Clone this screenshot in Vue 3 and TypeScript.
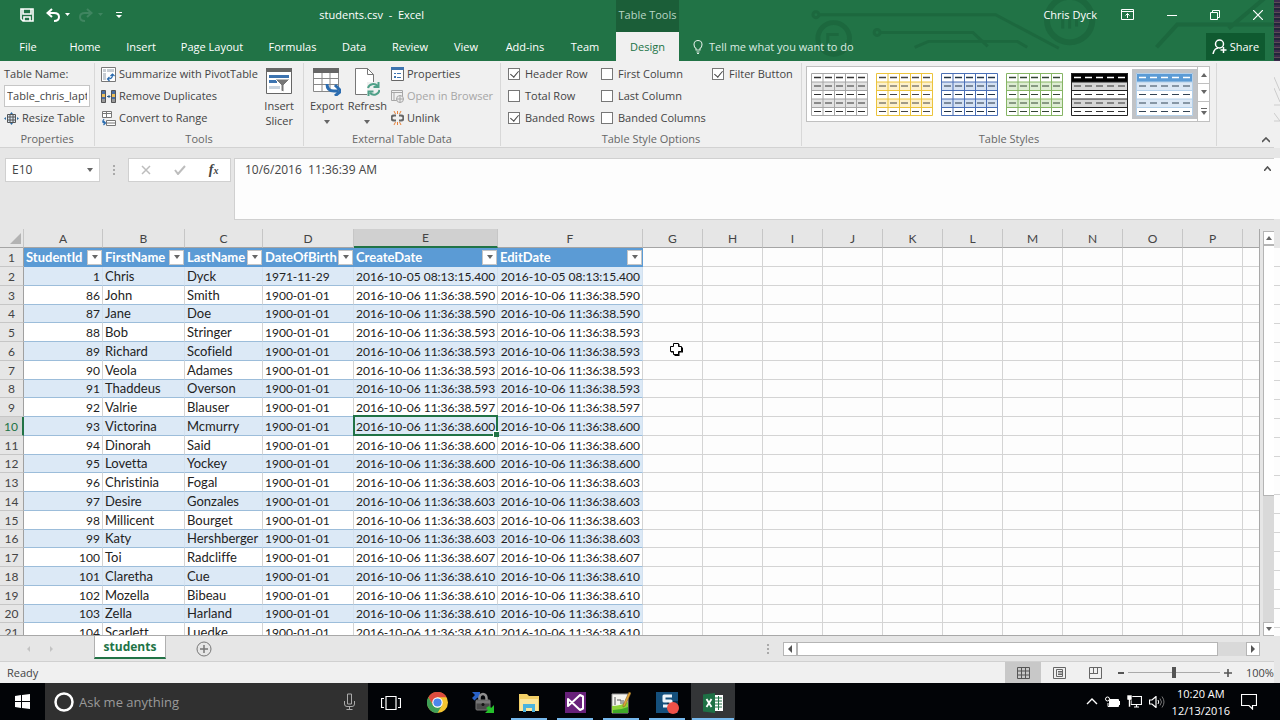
<script setup lang="ts">
import { ref } from 'vue'

interface Student {
  id: number
  first: string
  last: string
  born: string
  created: string
}

const tabs = ['File', 'Home', 'Insert', 'Page Layout', 'Formulas', 'Data', 'Review', 'View', 'Add-ins', 'Team', 'Design']

const names: [string, string, string][] = [
  ['John', 'Smith', '590'],
  ['Jane', 'Doe', '590'],
  ['Bob', 'Stringer', '593'],
  ['Richard', 'Scofield', '593'],
  ['Veola', 'Adames', '593'],
  ['Thaddeus', 'Overson', '593'],
  ['Valrie', 'Blauser', '597'],
  ['Victorina', 'Mcmurry', '600'],
  ['Dinorah', 'Said', '600'],
  ['Lovetta', 'Yockey', '600'],
  ['Christinia', 'Fogal', '603'],
  ['Desire', 'Gonzales', '603'],
  ['Millicent', 'Bourget', '603'],
  ['Katy', 'Hershberger', '603'],
  ['Toi', 'Radcliffe', '607'],
  ['Claretha', 'Cue', '610'],
  ['Mozella', 'Bibeau', '610'],
  ['Zella', 'Harland', '610'],
  ['Scarlett', 'Luedke', '610'],
]

const students: Student[] = [
  { id: 1, first: 'Chris', last: 'Dyck', born: '1971-11-29', created: '2016-10-05 08:13:15.400' },
  ...names.map(([first, last, ms], i) => ({
    id: 86 + i,
    first,
    last,
    born: '1900-01-01',
    created: `2016-10-06 11:36:38.${ms}`,
  })),
]

const letters = 'ABCDEFGHIJKLMNOP'.split('')
const fields = ['StudentId', 'FirstName', 'LastName', 'DateOfBirth', 'CreateDate', 'EditDate']
const blanks = 11

const options = ref([
  { label: 'Header Row', on: true },
  { label: 'First Column', on: false },
  { label: 'Filter Button', on: true },
  { label: 'Total Row', on: false },
  { label: 'Last Column', on: false },
  { label: 'Banded Rows', on: true },
  { label: 'Banded Columns', on: false },
])

interface TableStyle {
  name: string
  line: string
  head: string
  band: string
  dash: string
  columns: boolean
}

const tableStyles: TableStyle[] = [
  { name: 'Light gray', line: '#a6a6a6', head: '#fff', band: '#e3e3e3', dash: '#333', columns: true },
  { name: 'Gold', line: '#ecc43c', head: '#fff', band: '#fdf1cc', dash: '#444', columns: true },
  { name: 'Blue', line: '#4a6fb5', head: '#fff', band: '#d5e1f2', dash: '#234', columns: true },
  { name: 'Green', line: '#86b565', head: '#fff', band: '#deedd3', dash: '#343', columns: true },
  { name: 'Black', line: '#222', head: '#000', band: '#d6d6d6', dash: '#333', columns: false },
  { name: 'Medium blue', line: '#b4d0ea', head: '#5b9bd5', band: '#dce8f5', dash: '#345', columns: false },
]

const tableName = ref('Table_chris_laptop')
const cellName = ref('E10')
const formula = ref('10/6/2016  11:36:39 AM')
const zoom = ref(50)
const search = ref('')
</script>

<template>
  <div class="screen">
    <div class="desktop">
      <main class="excel">
        <header class="titlebar">
          <svg class="circuit" viewBox="0 0 470 60" aria-hidden="true">
            <g fill="none" stroke="#19613a" stroke-width="3" opacity=".6">
              <circle cx="6" cy="14" r="3" /><path d="M9 14H188L252 48" />
              <circle cx="68" cy="32" r="3" /><path d="M71 32H165L180 46M106 47L120 41H210L220 47" />
              <circle cx="24" cy="38" r="16" stroke-width="5" /><path d="M18 44V34H29" />
              <circle cx="263" cy="19" r="23" stroke-width="6" /><path d="M256 28V17M263 28V13M270 26V14" />
              <path d="M351 47L372 24H470M424 28L462 -4" stroke-width="4" />
            </g>
          </svg>
          <div class="quick">
            <button aria-label="Save"><svg width="14" height="14" viewBox="0 0 14 14"><path d="M1 1h12v12H3L1 11zM3 1v5h8V1M4 13V9h6v4" fill="none" stroke="#fff" stroke-width="1.6" /></svg></button>
            <button aria-label="Undo"><svg width="24" height="14" viewBox="0 0 24 14"><path d="M6 1L1.500 5L6 9M2 5H8Q13 5 13 9Q13 13 8 13" fill="none" stroke="#fff" stroke-width="2" /><path d="M19 5h5l-2.500 3z" fill="#fff" /></svg></button>
            <button aria-label="Redo" disabled><svg width="25" height="14" viewBox="0 0 25 14"><path d="M8 1L12.500 5L8 9M12 5H6Q1 5 1 9Q1 13 6 13" fill="none" stroke="#3f8560" stroke-width="2" /><path d="M19 5h5l-2.500 3z" fill="#3f8560" /></svg></button>
            <button aria-label="Customize"><svg width="6" height="7" viewBox="0 0 6 7"><path d="M0 0h6v1H0zM0 3h6L3 6z" fill="#fff" /></svg></button>
          </div>
          <h1 class="title">students.csv&nbsp; -&nbsp; Excel</h1>
          <div class="context">Table Tools</div>
          <div class="account">
            <span>Chris Dyck</span>
            <button aria-label="Ribbon options"><svg width="13" height="11" viewBox="0 0 13 11"><path d="M.5.5h12v10H.5zM.5 2.500h12M6.500 9V4.500M4.500 6.500l2-2 2 2" fill="none" stroke="#fff" /></svg></button>
            <button aria-label="Minimize"><svg width="10" height="10" viewBox="0 0 10 10"><path d="M0 5.500h10" stroke="#fff" /></svg></button>
            <button aria-label="Restore"><svg width="10" height="10" viewBox="0 0 10 10"><path d="M.5 2.500h7v7h-7zM2.500 2.500v-2h7v7h-2" fill="none" stroke="#fff" /></svg></button>
            <button aria-label="Close"><svg width="10" height="10" viewBox="0 0 10 10"><path d="M0 0l10 10M10 0L0 10" stroke="#fff" stroke-width="1.200" /></svg></button>
          </div>
          <nav class="tabs">
            <button v-for="t in tabs" :key="t" :class="{ active: t === 'Design' }">{{ t }}</button>
          </nav>
          <button class="tell">
            <svg width="10" height="14" viewBox="0 0 10 14"><path d="M3 10V8.500Q1 7 1 4.500A4 4 0 0 1 9 4.500Q9 7 7 8.500V10zM3.500 12h3M4 13.500h2" fill="none" stroke="#dcebe2" stroke-width="1.100" /></svg>
            Tell me what you want to do
          </button>
          <button class="share">
            <svg width="15" height="15" viewBox="0 0 15 15"><circle cx="7.500" cy="5" r="4" fill="none" stroke="#fff" stroke-width="1.500" /><path d="M1 15L2 12Q3 9.500 6 9M11.500 8v6M8.500 11h6" fill="none" stroke="#fff" stroke-width="1.500" /></svg>
            Share
          </button>
        </header>

        <section class="ribbon">
          <div class="group properties">
            <div class="body stack">
              <label for="table-name">Table Name:</label>
              <input id="table-name" v-model="tableName" />
              <button class="cmd">
                <svg width="15" height="13" viewBox="0 0 15 13"><path d="M3.500 2.500h8v8h-8zM3.500 5h8M3.500 8h8M6 2.500v8M9 2.500v8" fill="#dbe8f4" stroke="#555" /><path d="M0 6.500l2-1.500v3zM15 6.500L13 5v3zM7.500 0L6 2h3zM7.500 13L6 11h3z" fill="#2e6da4" /></svg>
                Resize Table
              </button>
            </div>
            <h2>Properties</h2>
          </div>

          <div class="group tools">
            <div class="body">
              <div class="stack">
                <button class="cmd"><svg width="15" height="15" viewBox="0 0 15 15"><path d="M.5.5h14v14H.5z" fill="#fff" stroke="#777" /><path d="M2 2h3v3H2zM6 2h7v3H6zM2 6h3v7H2z" fill="#c7cdd3" /><path d="M7 12q4.500 0 4.500-4M9.500 9l2-2 2 2M8.500 10l-2 2 2 2" fill="none" stroke="#2b6cb0" stroke-width="1.200" /></svg>Summarize with PivotTable</button>
                <button class="cmd"><svg width="15" height="13" viewBox="0 0 15 13"><path d="M.5.5h4v12h-4zM10.500.5h4v12h-4z" fill="#4a6fa5" stroke="#555" /><path d="M1 4h3v3H1zM11 4h3v3h-3z" fill="#f0c05a" /><path d="M1 9h3v3H1zM11 9h3v3h-3z" fill="#999" /><path d="M6 6.500h3M7.500 5L9 6.500 7.500 8" fill="none" stroke="#2b5c8a" /></svg>Remove Duplicates</button>
                <button class="cmd"><svg width="15" height="15" viewBox="0 0 15 15"><path d="M1.500.5h9v6h-9zM1.500 2.500h9M5.500.5v6M5.500 9.500h9v5h-9zM5.500 12h9" fill="#fff" stroke="#777" /><path d="M3 8q-3 4 1 4M2.500 10l2 2-2 2" fill="none" stroke="#2b6cb0" stroke-width="1.200" /></svg>Convert to Range</button>
              </div>
              <button class="big slicer">
                <svg width="26" height="26" viewBox="0 0 26 26"><path d="M.5.5h25v25H.5z" fill="#fff" stroke="#666" /><path d="M0 0h26v4H0z" fill="#666" /><path d="M3 7h20v3H3zM3 12h8v3H3z" fill="#3d74b0" /><path d="M3 18h11v3H3z" fill="#c8d3de" /><path d="M9 11h15l-6 6v7l-3-1v-6z" fill="#777" stroke="#fff" /></svg>
                <span>Insert<br />Slicer</span>
              </button>
            </div>
            <h2>Tools</h2>
          </div>

          <div class="group external">
            <div class="body">
              <button class="big">
                <svg width="28" height="28" viewBox="0 0 28 28"><path d="M.5.5h25v23H.5zM.5 10.500h25M.5 16.500h25M9 4v20M17 4v20" fill="#fff" stroke="#888" /><path d="M0 0h26v5H0z" fill="#666" /><path d="M14 16q0 7 7 7h4M22 17l6 6-6 5" fill="none" stroke="#2b6cb0" stroke-width="3" /></svg>
                <span>Export</span><i class="down"></i>
              </button>
              <button class="big">
                <svg width="26" height="28" viewBox="0 0 26 28"><path d="M1.500.5h12l6 6v20h-18z" fill="#fff" stroke="#777" /><path d="M13.500.5v6h6" fill="none" stroke="#777" /><path d="M13 14h13v14H13z" fill="#f0f0f0" /><path d="M14 20a5.500 5.500 0 0 1 9.500-2M25.500 22a5.500 5.500 0 0 1-9.500 3M24.500 14v5h-5M14.500 28v-4.500h5" fill="none" stroke="#4fa088" stroke-width="2" /></svg>
                <span>Refresh</span><i class="down"></i>
              </button>
              <div class="stack">
                <button class="cmd"><svg width="13" height="14" viewBox="0 0 13 14"><path d="M.5.5h12v13H.5z" fill="#fff" stroke="#666" /><path d="M0 0h13v3H0z" fill="#3d74b0" /><path d="M3 6h2v1H3zM6 6h4v1H6zM3 9h2v2H3zM6 10h4v1H6z" fill="#3d74b0" /></svg>Properties</button>
                <button class="cmd" disabled><svg width="13" height="13" viewBox="0 0 13 13"><path d="M.5.5h11v10H.5zM.5 2.500h11M3 3v8" fill="none" stroke="#a6a6a6" /><circle cx="9" cy="9" r="3.500" fill="#eee" stroke="#a6a6a6" /><path d="M5.500 9h7M9 5.500v7" stroke="#a6a6a6" /></svg>Open in Browser</button>
                <button class="cmd"><svg width="13" height="14" viewBox="0 0 13 14"><path d="M5 4.500H3a2.500 2.500 0 0 0 0 5h2M8 4.500h2a2.500 2.500 0 0 1 0 5H8" fill="none" stroke="#666" stroke-width="2" /><path d="M6.500 0v3M3 0l1.500 3M10 0L8.500 3M6.500 11v3M3 14l1.500-3M10 14l-1.500-3" stroke="#e8823a" /></svg>Unlink</button>
              </div>
            </div>
            <h2>External Table Data</h2>
          </div>

          <div class="group style-options">
            <div class="body checks">
              <label v-for="o in options" :key="o.label"><input v-model="o.on" type="checkbox" />{{ o.label }}</label>
            </div>
            <h2>Table Style Options</h2>
          </div>

          <div class="group styles">
            <div class="gallery">
              <button v-for="(s, i) in tableStyles" :key="s.name" :aria-label="s.name" class="swatch" :class="{ chosen: i === 5 }">
                <svg width="57" height="43" viewBox="0 0 57 43">
                  <rect x=".5" y=".5" width="56" height="42" fill="#fff" />
                  <rect width="57" height="9" :fill="s.head" />
                  <rect y="9" width="57" height="8" :fill="s.band" />
                  <rect y="26" width="57" height="8" :fill="s.band" />
                  <path d="M.5.5h56v42H.5zM0 9h57M0 17.500h57M0 26h57M0 34.500h57" fill="none" :stroke="s.line" />
                  <path v-if="s.columns" d="M12 0v43M23.500 0v43M34.500 0v43M45.500 0v43" :stroke="s.line" />
                  <path d="M3 4.500h51" :stroke="s.columns ? s.dash : '#fff'" stroke-width="1.400" stroke-dasharray="7 4" />
                  <path d="M3 13h51M3 21.500h51M3 30h51M3 38.500h51" :stroke="s.dash" stroke-dasharray="7 4" />
                </svg>
              </button>
              <div class="spin">
                <button aria-label="Previous styles"><i class="up"></i></button>
                <button aria-label="Next styles"><i class="down"></i></button>
                <button aria-label="More styles" class="more"><i class="down"></i></button>
              </div>
            </div>
            <h2>Table Styles</h2>
          </div>
          <button class="collapse" aria-label="Collapse ribbon"><svg width="8" height="6" viewBox="0 0 8 6"><path d="M0 5l4-4 4 4" fill="none" stroke="#555" stroke-width="1.600" /></svg></button>
        </section>

        <section class="formula-bar">
          <div class="namebox"><input v-model="cellName" aria-label="Name box" /><i class="down"></i></div>
          <span class="grip"></span>
          <div class="fx">
            <button aria-label="Cancel"><svg width="10" height="10" viewBox="0 0 10 10"><path d="M1 1l8 8M9 1L1 9" stroke="#bdbdbd" stroke-width="1.500" /></svg></button>
            <button aria-label="Enter"><svg width="12" height="10" viewBox="0 0 12 10"><path d="M1 5l3 4 7-8" fill="none" stroke="#bdbdbd" stroke-width="2" /></svg></button>
            <button aria-label="Insert function" class="fn">f<sub>x</sub></button>
          </div>
          <textarea v-model="formula" aria-label="Formula"></textarea>
          <button class="shrink" aria-label="Collapse formula bar"><svg width="7" height="5" viewBox="0 0 7 5"><path d="M0 5l3.500-4L7 5" fill="none" stroke="#555" stroke-width="1.600" /></svg></button>
        </section>

        <section class="sheet">
          <div class="pane">
            <table>
              <colgroup>
                <col class="w-head" /><col class="w-a" /><col class="w-b" /><col class="w-c" /><col class="w-d" /><col class="w-e" /><col class="w-f" />
                <col v-for="n in blanks" :key="n" class="w-blank" />
              </colgroup>
              <thead>
                <tr>
                  <th class="corner"><svg width="11" height="11" viewBox="0 0 11 11"><path d="M11 0v11H0z" fill="#b3b3b3" /></svg></th>
                  <th v-for="l in letters" :key="l" :class="{ current: l === 'E' }">{{ l }}</th>
                  <th></th>
                </tr>
              </thead>
              <tbody>
                <tr class="fields">
                  <th>1</th>
                  <td v-for="f in fields" :key="f"><div class="field">{{ f }}<button :aria-label="`Filter ${f}`"><i class="down"></i></button></div></td>
                  <td v-for="n in blanks" :key="n"></td>
                </tr>
                <tr v-for="(s, i) in students" :key="s.id" :class="{ band: i % 2 === 0, current: i === 8 }">
                  <th>{{ i + 2 }}</th>
                  <td class="data digits right">{{ s.id }}</td>
                  <td class="data">{{ s.first }}</td>
                  <td class="data">{{ s.last }}</td>
                  <td class="data digits">{{ s.born }}</td>
                  <td class="data digits right" :class="{ selected: i === 8 }">{{ s.created }}</td>
                  <td class="data digits right">{{ s.created }}</td>
                  <td v-for="n in blanks" :key="n"></td>
                </tr>
              </tbody>
            </table>
            <svg class="pointer" width="15" height="15" viewBox="0 0 15 15"><path d="M5.500 2v3.500H2v5h3.500V14h5v-3.500H14v-5h-3.500V2z" fill="#000" /><path d="M4.500 1.500v3h-3v5h3v3h5v-3h3v-5h-3v-3z" fill="#fff" stroke="#000" /></svg>
          </div>
          <div class="vscroll">
            <button aria-label="Scroll up"><i class="up"></i></button>
            <div class="thumb"></div>
            <button aria-label="Scroll down"><i class="down"></i></button>
          </div>
        </section>

        <section class="sheet-tabs">
          <button class="nav left" aria-label="Previous sheet"></button>
          <button class="nav right" aria-label="Next sheet"></button>
          <button class="sheet-tab">students</button>
          <button class="add" aria-label="New sheet"><svg width="16" height="16" viewBox="0 0 16 16"><circle cx="8" cy="8" r="7" fill="none" stroke="#777" /><path d="M8 4v8M4 8h8" stroke="#777" stroke-width="1.500" /></svg></button>
          <span class="grip"></span>
          <div class="hscroll">
            <button aria-label="Scroll left"><i class="left-arrow"></i></button>
            <div class="thumb"></div>
            <button aria-label="Scroll right"><i class="right-arrow"></i></button>
          </div>
        </section>

        <footer class="status">
          <span>Ready</span>
          <div class="views">
            <button class="on" aria-label="Normal"><svg width="13" height="12" viewBox="0 0 13 12"><path d="M.5.5h12v11H.5zM.5 4h12M.5 8h12M4.500 0v12M8.500 0v12" fill="none" stroke="#555" /></svg></button>
            <button aria-label="Page layout"><svg width="13" height="12" viewBox="0 0 13 12"><path d="M.5.5h12v11H.5zM3.500 2.500h6v7h-6zM5 4.500h4M5 6h4M5 7.500h4" fill="none" stroke="#666" /></svg></button>
            <button aria-label="Page break"><svg width="13" height="12" viewBox="0 0 13 12"><path d="M.5.5h12v11H.5zM4.500 0v7M8.500 0v7M.5 6.500h8" fill="none" stroke="#666" /></svg></button>
          </div>
          <div class="zoom">
            <button aria-label="Zoom out"><svg width="6" height="8" viewBox="0 0 6 8"><path d="M0 4h6" stroke="#555" stroke-width="2" /></svg></button>
            <input v-model="zoom" type="range" aria-label="Zoom" />
            <button aria-label="Zoom in"><svg width="8" height="8" viewBox="0 0 8 8"><path d="M0 4h8M4 0v8" stroke="#555" stroke-width="1.600" /></svg></button>
            <span>100%</span>
          </div>
        </footer>
      </main>

      <div class="edge">
        <div class="noise"></div>
        <div class="strip">
          <svg width="6" height="62" viewBox="0 0 6 62"><path d="M0 16l6 14M0 27l6 14M0 44h6M0 60h6M0 52l6 8" stroke="#ccc" fill="none" /></svg>
        </div>
        <div class="lines"></div>
      </div>
    </div>

    <footer class="taskbar">
      <button class="start" aria-label="Start"><svg width="15" height="15" viewBox="0 0 15 15"><path d="M0 2l6-1v6H0zM7 1l8-1v7H7zM0 8h6v6l-6-1zM7 8h8v7l-8-1z" fill="#fff" /></svg></button>
      <div class="cortana">
        <svg width="20" height="20" viewBox="0 0 20 20"><circle cx="10" cy="10" r="8.500" fill="none" stroke="#fff" stroke-width="2.500" /></svg>
        <input v-model="search" aria-label="Search" placeholder="Ask me anything" />
        <svg width="11" height="17" viewBox="0 0 11 17"><path d="M3.500 1h4v10h-4zM.5 8v3q0 2.500 2.500 2.500h5q2.500 0 2.500-2.500V8M5.500 13.500v3M2.500 16.500h6" fill="none" stroke="#aaa" /></svg>
      </div>
      <button class="app" aria-label="Task view"><svg width="20" height="14" viewBox="0 0 20 14"><path d="M5 .5h10v13H5zM3 2.500H.5v9H3M17 2.500h2.500v9H17" fill="none" stroke="#fff" stroke-width="1.200" /></svg></button>
      <button class="app" aria-label="Chrome">
        <svg width="21" height="21" viewBox="0 0 20 20"><circle cx="10" cy="10" r="10" fill="#f4c430" /><path d="M10 5h8.700A10 10 0 0 0 1.300 5L5.700 12.500z" fill="#dd4b3e" /><path d="M1.300 5A10 10 0 0 0 10 20L14.300 12.500 10 15 5.700 12.500z" fill="#3f9f57" /><circle cx="10" cy="10" r="5" fill="#fff" /><circle cx="10" cy="10" r="3.900" fill="#4c86ea" /></svg>
      </button>
      <button class="app" aria-label="Secure copy">
        <svg width="22" height="22" viewBox="0 0 22 22"><path d="M0 0h8v8L5.500 5.500 2.500 8.500 0 6l3-3z" fill="#2962c8" /><path d="M7.500 10V6a3.500 4 0 0 1 7 0v4" fill="none" stroke="#8f8f8f" stroke-width="2.500" /><rect x="4" y="8" width="14" height="10" rx="1" fill="#4a4a4a" stroke="#777" /><path d="M4 8.500h14v3H4z" fill="#777" /><circle cx="11" cy="12.500" r="1.500" fill="#111" /><path d="M22 21h-9l3-3-2-2 3-2 2 2 3-3z" fill="#25c02b" /></svg>
      </button>
      <button class="app open" aria-label="File Explorer">
        <svg width="20" height="18" viewBox="0 0 20 18"><path d="M0 0h8l2 2h10v15H0z" fill="#f2cf66" /><path d="M1 5h18v12H1z" fill="#fbe59b" /><path d="M4 10h12v8h-3v-4H7v4H4z" fill="#4bb3de" /></svg>
      </button>
      <button class="app open" aria-label="Visual Studio">
        <svg width="21" height="21" viewBox="0 0 21 21"><path d="M0 0h21v21H0z" fill="#68217a" /><path d="M3 7l4 3.500L15 3l3 1.500v12L15 18l-8-7.500L3 14z" fill="none" stroke="#fff" stroke-width="2" stroke-linejoin="round" /></svg>
      </button>
      <button class="app open" aria-label="Notepad++">
        <svg width="20" height="22" viewBox="0 0 20 22"><path d="M1 2h16v19H1z" fill="#f5f5f0" stroke="#999" /><path d="M1 14q8 0 16-4v11H1z" fill="#8fd33a" /><path d="M2 18q8 0 15-3v6H2z" fill="#3faa28" /><path d="M4 5v8M6 8h4v4M12 8v4" fill="none" stroke="#555" /><path d="M18 0l2 1-6 13-2 1v-2z" fill="#e0a43a" stroke="#7a5a20" stroke-width=".5" /></svg>
      </button>
      <button class="app open" aria-label="Screen recorder">
        <svg width="23" height="22" viewBox="0 0 23 22"><path d="M0 0h22v21H0z" fill="#15507c" /><path d="M11 9h11v12L11 15z" fill="#0c304d" /><path d="M16 4H8v5h7v5H7" fill="none" stroke="#eef5fa" stroke-width="3" stroke-linejoin="round" /><circle cx="17" cy="16" r="6" fill="#ef5148" /></svg>
      </button>
      <button class="app open focused" aria-label="Excel">
        <svg width="20" height="20" viewBox="0 0 20 20"><path d="M11 2h9v16h-9z" fill="#fff" /><path d="M12 5h7M12 8h7M12 11h7M12 14h7M15.500 3v14" stroke="#217346" /><path d="M0 1.500L12 0v20L0 18.500z" fill="#1e7145" /><path d="M3.500 6l5 8M8.500 6l-5 8" stroke="#fff" stroke-width="1.800" /></svg>
      </button>
      <div class="tray">
        <button aria-label="Hidden icons"><svg width="12" height="7" viewBox="0 0 12 7"><path d="M1 6l5-5 5 5" fill="none" stroke="#fff" stroke-width="1.400" /></svg></button>
        <button aria-label="Battery"><svg width="15" height="12" viewBox="0 0 15 12"><path d="M4 4h10v6H4z" fill="#fff" /><path d="M2 3.500h11.500v7H3V7" fill="none" stroke="#fff" /><circle cx="2.500" cy="3" r="2" fill="#000" stroke="#fff" /><path d="M14 5h1v4h-1z" fill="#fff" /></svg></button>
        <button aria-label="Network"><svg width="15" height="13" viewBox="0 0 15 13"><path d="M4 1.500h10.500v8H4zM7 12h5M9.500 9.500V12" fill="none" stroke="#fff" stroke-width="1.200" /><path d="M0 0h5v5H3.500v7H1.500V5H0z" fill="#fff" stroke="#000" stroke-width=".6" /></svg></button>
        <button aria-label="Volume"><svg width="16" height="12" viewBox="0 0 16 12"><path d="M.5 4H3l4-3.500v11L3 8H.5z" fill="none" stroke="#fff" stroke-width="1.200" /><path d="M9 4q1.500 2 0 4" fill="none" stroke="#fff" /><path d="M11 2.500q3 3.500 0 7M13 .5q4 5.500 0 11" fill="none" stroke="#777" /></svg></button>
        <time>10:20 AM<br />12/13/2016</time>
        <button aria-label="Notifications"><svg width="16" height="16" viewBox="0 0 16 16"><path d="M.5.5h15v11h-4v3.500L8 11.500H.5z" fill="none" stroke="#fff" stroke-width="1.200" /></svg></button>
      </div>
    </footer>
  </div>
</template>

<style>
body {
  margin: 0;
}
</style>

<style scoped>
* {
  box-sizing: border-box;
}
.screen {
  display: flex;
  flex-direction: column;
  height: 100vh;
  overflow: hidden;
  background: #e6e6e6;
  color: #444;
  font: 11px/16px 'Open Sans', 'Noto Sans', sans-serif;
}
button,
input,
textarea {
  font: inherit;
  color: inherit;
  background: none;
  border: 0;
  padding: 0;
  margin: 0;
  outline: 0;
  border-radius: 0;
}
button {
  display: flex;
  align-items: center;
  justify-content: center;
  white-space: nowrap;
}
svg {
  display: block;
  flex: none;
}
h1,
h2 {
  margin: 0;
  font: inherit;
}
.desktop {
  flex: 1;
  min-height: 0;
  display: flex;
}
.excel {
  flex: 1;
  min-width: 0;
  display: flex;
  flex-direction: column;
}
.down,
.up {
  flex: none;
  border: 3px solid transparent;
  border-top: 4px solid #666;
  border-bottom: 0;
}
.up {
  border-top: 0;
  border-bottom: 4px solid #666;
}
.left-arrow,
.right-arrow {
  border: 4px solid transparent;
  border-right: 4px solid #555;
  border-left: 0;
}
.right-arrow {
  border-right: 0;
  border-left: 4px solid #555;
}

/* title bar and tabs */
.titlebar {
  position: relative;
  display: grid;
  grid-template-columns: 616px 63px 1fr auto;
  grid-template-rows: 32px 29px;
  color: #fff;
  background: #217346;
}
.circuit {
  position: absolute;
  right: 0;
  top: 0;
  width: 464px;
  height: 61px;
}
.titlebar > :not(.circuit) {
  position: relative;
}
.quick {
  grid-area: 1 / 1;
  display: flex;
  align-items: center;
  padding: 0 0 2px 20px;
  gap: 12px;
}
.quick button:nth-child(3) {
  margin-left: -3px;
}
.title {
  grid-area: 1 / 1;
  justify-self: end;
  align-self: center;
  margin: 0 192px 2px 0;
}
.context {
  grid-area: 1 / 2;
  display: flex;
  align-items: center;
  justify-content: center;
  padding-bottom: 2px;
  background: #1b5e38;
  color: #b9d6c5;
}
.account {
  grid-area: 1 / 3 / 2 / 5;
  display: flex;
  align-items: center;
  justify-content: flex-end;
  padding: 0 11px 3px 0;
}
.account span {
  margin-right: 24px;
}
.account button:nth-of-type(n + 2) {
  margin-left: 33px;
}
.tabs {
  grid-area: 2 / 1 / 3 / 3;
  display: grid;
  grid-template-columns: 56px 58px 54px 88px 73px 50px 62px 50px 68px 52px 5px 63px;
}
.tabs .active {
  grid-column: 12;
  background: #f0f0f0;
  color: #217346;
}
.tell {
  grid-area: 2 / 3;
  justify-self: start;
  margin-left: 14px;
  gap: 6px;
  color: #dcebe2;
}
.share {
  grid-area: 2 / 4;
  width: 59px;
  height: 27px;
  margin: 1px 9px 0 0;
  gap: 3px;
  background: #0f5a30;
}

/* ribbon */
.ribbon {
  position: relative;
  display: flex;
  height: 87px;
  padding-top: 2px;
  background: #f0f0f0;
  border-bottom: 1px solid #d2d2d2;
}
.group {
  display: flex;
  flex-direction: column;
  height: 83px;
  border-right: 1px solid #d8d8d8;
}
.group h2 {
  margin-top: auto;
  line-height: 15px;
  text-align: center;
  color: #666;
}
.body {
  display: flex;
}
.stack {
  display: flex;
  flex-direction: column;
  align-items: flex-start;
}
.stack > * {
  height: 22px;
  line-height: 22px;
}
.cmd {
  gap: 3px;
}
button:disabled {
  color: #a6a6a6;
}
.properties {
  width: 95px;
  padding-left: 4px;
}
.properties h2 {
  padding-right: 4px;
}
.properties input {
  width: 86px;
  padding: 0 2px;
  background: #fff;
  border: 1px solid #c6c6c6;
}
.tools {
  width: 209px;
}
.tools .body {
  padding-left: 6px;
}
.slicer {
  margin-left: auto;
  margin-right: 9px;
}
.big {
  flex-direction: column;
  justify-content: flex-start;
  padding-top: 5px;
}
.big span {
  margin-top: 4px;
  line-height: 15px;
}
.big .down {
  margin-top: 7px;
}
.external {
  width: 197px;
}
.external .body {
  padding-left: 6px;
  gap: 4px;
}
.external .big span {
  margin-top: 2px;
}
.style-options {
  width: 301px;
}
.checks {
  display: grid;
  grid-template-columns: 93px 111px 1fr;
  padding-left: 7px;
}
.checks label {
  display: flex;
  align-items: center;
  height: 22px;
  gap: 5px;
  white-space: nowrap;
}
.checks label:nth-child(5) {
  grid-column: 2 / 4;
}
.checks input {
  appearance: none;
  width: 12px;
  height: 12px;
  background: #fff;
  border: 1px solid #777;
}
.checks input:checked::after {
  content: '';
  display: block;
  width: 4px;
  height: 7px;
  margin-left: 3px;
  border: solid #444;
  border-width: 0 1px 1px 0;
  transform: rotate(40deg);
}
.styles {
  width: 415px;
}
.gallery {
  display: flex;
  width: 404px;
  height: 56px;
  margin: 3px 0 0 4px;
  background: #fff;
  border: 1px solid #c0c0c0;
}
.swatch {
  width: 65px;
}
.swatch.chosen {
  margin: 2px 0;
  background: #c0c3c7;
}
.spin {
  flex: 1;
  display: grid;
  border-left: 1px solid #c0c0c0;
}
.spin button + button {
  border-top: 1px solid #c0c0c0;
}
.more {
  flex-direction: column;
  gap: 2px;
}
.more::before {
  content: '';
  width: 6px;
  height: 1px;
  background: #666;
}
.collapse {
  margin: auto 4px 4px auto;
}

/* formula bar */
.formula-bar {
  display: flex;
  align-items: flex-start;
  height: 81px;
  padding: 10px 0 9px 5px;
  font-size: 12px;
  position: relative;
}
.namebox {
  display: flex;
  align-items: center;
  width: 95px;
  height: 24px;
  padding: 0 6px;
  background: #fff;
  border: 1px solid #d0d0d0;
}
.namebox input {
  flex: 1;
  min-width: 0;
}
.grip {
  width: 2px;
  height: 10px;
  border-left: 2px dotted #aaa;
}
.formula-bar .grip {
  margin: 7px 13px 0;
}
.fx {
  display: flex;
  height: 24px;
  width: 103px;
  background: #fff;
  border: 1px solid #d0d0d0;
  justify-content: space-around;
}
.fn {
  font: italic bold 14px 'Liberation Serif', serif;
}
.fn sub {
  font-size: 10px;
}
textarea {
  flex: 1;
  align-self: stretch;
  margin-left: 3px;
  padding: 3px 10px;
  background: #fdfdfd;
  border: 1px solid #d0d0d0;
  border-right: 0;
  resize: none;
}
.shrink {
  position: absolute;
  right: 3px;
  top: 18px;
}

/* sheet */
.sheet {
  flex: 1;
  min-height: 0;
  display: flex;
}
.pane {
  position: relative;
  flex: 1;
  min-width: 0;
  overflow: hidden;
  border-right: 1px solid #a8a8a8;
  border-bottom: 1px solid #a8a8a8;
}
table {
  table-layout: fixed;
  width: 1303px;
  border-spacing: 0;
  font: 13px/18px Lato, sans-serif;
  font-variant-ligatures: none;
  color: #222;
}
.w-head {
  width: 24px;
}
.w-a {
  width: 79px;
}
.w-b {
  width: 82px;
}
.w-c {
  width: 78px;
}
.w-d {
  width: 91px;
}
.w-e {
  width: 144px;
}
.w-f {
  width: 145px;
}
.w-blank {
  width: 60px;
}
tr {
  height: 19px;
}
tbody tr:nth-child(4n) {
  height: 18px;
}
th,
td {
  padding: 0;
  white-space: nowrap;
  border: solid #d4d4d4;
  border-width: 0 1px 1px 0;
  line-height: 17px;
}
td {
  background: #fdfdfd;
}
th {
  font-size: 12px;
  font-weight: 400;
  color: #444;
  background: #e6e6e6;
}
thead th {
  border-color: #c6c6c6 #c6c6c6 #a5a5a5;
}
tbody th {
  border-color: #c6c6c6 #a0a0a0 #c6c6c6;
}
thead th.current {
  background: #d0d0d0;
  border-bottom: 2px solid #217346;
  line-height: 16px;
}
.corner svg {
  margin-left: 10px;
}
tr.current th {
  color: #217346;
  background: #d6d6d6;
  border-right: 2px solid #217346;
}
.fields td:nth-child(-n + 7) {
  background: #5b9bd5;
  border-color: #5b9bd5;
  color: #fff;
  font-weight: 700;
}
.field {
  display: flex;
  justify-content: space-between;
  align-items: center;
  height: 17px;
  padding-left: 2px;
}
.field button {
  width: 15px;
  height: 15px;
  background: #fff;
  border: 1px solid #c5c5c5;
}
.data {
  padding: 0 2px;
  border-bottom-color: #9cbdda;
  background: #fff;
}
.band .data {
  background: #dce9f6;
  border-right-color: #d3e1ef;
}
.digits {
  font-size: 12px;
}
.right {
  text-align: right;
}
.selected {
  position: relative;
}
.selected::before {
  content: '';
  position: absolute;
  inset: -2px -1px -1px;
  border: 2px solid #217346;
}
.selected::after {
  content: '';
  position: absolute;
  right: -2px;
  bottom: -2px;
  width: 5px;
  height: 5px;
  background: #217346;
  border: solid #fff;
  border-width: 1px 0 0 1px;
}
.pointer {
  position: absolute;
  left: 669px;
  top: 113px;
}
.vscroll {
  display: flex;
  flex-direction: column;
  width: 11px;
  margin: 2px 0 0 3px;
  background: #d9d9d9;
}
.vscroll button {
  height: 14px;
  background: #fff;
  border: 1px solid #b5b5b5;
  border-right: 0;
}
.vscroll .thumb {
  height: 251px;
  margin-bottom: auto;
  background: #fff;
  border: 1px solid #b5b5b5;
  border-right: 0;
}

/* sheet tabs */
.sheet-tabs {
  display: flex;
  height: 26px;
  border-bottom: 1px solid #d0d0d0;
}
.nav {
  width: 26px;
}
.nav.left {
  margin-left: 14px;
}
.nav::before {
  content: '';
  border: 3px solid transparent;
}
.nav.left::before {
  border-right-color: #c3c3c3;
}
.nav.right::before {
  border-left-color: #c3c3c3;
}
.sheet-tab {
  width: 72px;
  height: 23px;
  margin: 0 30px 0 28px;
  background: #fff;
  border: solid #b0b0b0;
  border-width: 0 1px;
  border-bottom: 2px solid #217346;
  color: #217346;
  font-size: 12px;
  font-weight: 700;
}
.sheet-tabs .grip {
  margin: 8px 14px 0 auto;
}
.hscroll {
  display: flex;
  width: 477px;
  height: 14px;
  margin: 6px 14px 0 0;
  background: #d9d9d9;
}
.hscroll > * {
  background: #fff;
  border: 1px solid #b5b5b5;
}
.hscroll button {
  width: 14px;
}
.hscroll .thumb {
  width: 421px;
  margin-right: auto;
}

/* status bar */
.status {
  display: flex;
  align-items: center;
  height: 21px;
  padding-left: 7px;
  background: #f0f0f0;
}
.views {
  display: flex;
  height: 21px;
  margin-left: auto;
}
.views button {
  width: 36px;
}
.views .on {
  background: #c8c8c8;
}
.zoom {
  display: flex;
  align-items: center;
  gap: 4px;
  margin-left: 5px;
}
.zoom input {
  appearance: none;
  width: 92px;
  height: 12px;
  background: linear-gradient(#aaa, #aaa) center / 100% 1px no-repeat;
}
.zoom input::-webkit-slider-thumb {
  appearance: none;
  width: 4px;
  height: 11px;
  background: #555;
}
.zoom span {
  width: 28px;
  margin-left: 10px;
}

/* right edge of the desktop */
.edge {
  width: 6px;
  display: flex;
  flex-direction: column;
}
.noise {
  height: 61px;
  background: repeating-linear-gradient(#3b2a4c 0 2px, #5c4a55 2px 3px, #22263a 3px 5px);
}
.strip {
  height: 187px;
  background: linear-gradient(#f0f0f0 0 87px, #e6e6e6 87px 97px, #fdfdfd 97px 158px, #e6e6e6 158px);
}
.lines {
  flex: 1;
  margin-bottom: 47px;
  background: repeating-linear-gradient(#fdfdfd 0 18px, #d4d4d4 18px 19px);
}

/* taskbar */
.taskbar {
  display: flex;
  height: 37px;
  background: #020407;
  color: #fff;
}
.start {
  width: 45px;
}
.cortana {
  display: flex;
  align-items: center;
  width: 323px;
  padding: 0 13px 0 9px;
  gap: 5px;
  background: #303030;
}
.cortana input {
  flex: 1;
  min-width: 0;
  font-size: 13px;
}
.cortana input::placeholder {
  color: #9a9a9a;
  opacity: 1;
}
.app {
  width: 46px;
  border: solid transparent;
  border-width: 2px 1px 0;
}
.app.open {
  box-shadow: inset 0 -2px #76b9ed;
  width: 38px;
  margin: 0 4px;
}
.app.focused {
  width: 44px;
  margin: 0 1px;
  background: #333537;
}
.tray {
  display: flex;
  align-items: center;
  gap: 7px;
  margin-left: auto;
  padding-right: 23px;
}
.tray time {
  margin: 0 4px 0 0;
  line-height: 17px;
  text-align: center;
}
</style>
